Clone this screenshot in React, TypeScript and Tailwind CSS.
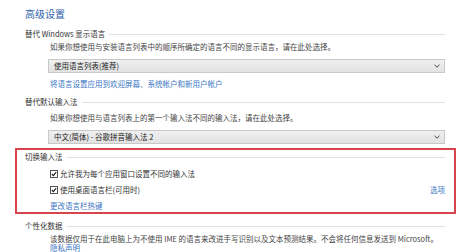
import React from "react";

const FONT = { fontFamily: '"Noto Sans CJK SC", "Noto Sans", sans-serif' };

function Header({ label }: { label: string }) {
  return (
    <div className="flex h-[12px] items-center">
      <span className="text-[7.5px] leading-none text-[#333]">{label}</span>
      <div className="ml-[4px] h-px flex-1 bg-[#e2e2e2]" />
    </div>
  );
}

function Dropdown({ value }: { value: string }) {
  return (
    <div className="ml-[23px] flex h-[14px] items-center justify-between border border-[#c8c8c8] bg-gradient-to-b from-[#f0f0f0] to-[#e2e2e2] pl-[5px] pr-[4px]">
      <span className="text-[7.5px] leading-none text-[#222]">{value}</span>
      <svg width="6" height="4" viewBox="0 0 6 4" className="text-[#444]">
        <path d="M0.5 0.8 L3 3.2 L5.5 0.8" fill="none" stroke="currentColor" strokeWidth="1" />
      </svg>
    </div>
  );
}

function Check({ label }: { label: string }) {
  return (
    <div className="flex items-center">
      <div className="flex h-[8px] w-[8px] items-center justify-center border border-[#555] bg-white">
        <svg width="6" height="6" viewBox="0 0 6 6">
          <path d="M0.8 3 L2.4 4.6 L5.2 1.2" fill="none" stroke="#222" strokeWidth="1.1" />
        </svg>
      </div>
      <span className="ml-[2px] text-[7.5px] leading-none text-[#333]">{label}</span>
    </div>
  );
}

export default function App() {
  return (
    <div className="h-[252px] w-[461px] overflow-hidden bg-white" style={FONT}>
      {/* title */}
      <div className="ml-[25px] mt-[6px] flex h-[16px] items-center">
        <span className="text-[10px] leading-none text-[#2f62aa]">高级设置</span>
      </div>

      {/* 显示语言 */}
      <div className="ml-[25px] mr-[16px] mt-[6px]">
        <Header label="替代 Windows 显示语言" />
        <div className="ml-[25px] mt-px flex h-[12px] items-center text-[7.5px] leading-none text-[#444]">
          如果你想使用与安装语言列表中的顺序所确定的语言不同的显示语言，请在此处选择。
        </div>
        <div className="mt-[6px]">
          <Dropdown value="使用语言列表(推荐)" />
        </div>
        <div className="ml-[25px] mt-[5px] flex h-[12px] items-center text-[7.5px] leading-none text-[#3a76c4]">
          将语言设置应用到欢迎屏幕、系统帐户和新用户帐户
        </div>
      </div>

      {/* 默认输入法 */}
      <div className="ml-[25px] mr-[16px] mt-[6px]">
        <Header label="替代默认输入法" />
        <div className="ml-[25px] mt-[4px] flex h-[12px] items-center text-[7.5px] leading-none text-[#444]">
          如果你想使用与语言列表上的第一个输入法不同的输入法，请在此处选择。
        </div>
        <div className="mt-[6px]">
          <Dropdown value="中文(简体) - 谷歌拼音输入法 2" />
        </div>
      </div>

      {/* 切换输入法 */}
      <div className="ml-[15px] mr-[5px] mt-[4px] border-2 border-[#d8444b] pl-[8px] pr-[9px] pt-[1px]">
        <Header label="切换输入法" />
        <div className="ml-[25px] mt-[5px] flex h-[12px] items-center">
          <Check label="允许我为每个应用窗口设置不同的输入法" />
        </div>
        <div className="ml-[25px] mt-[4px] flex h-[12px] items-center justify-between">
          <Check label="使用桌面语言栏(可用时)" />
          <span className="text-[7.5px] leading-none text-[#3a76c4]">选项</span>
        </div>
        <div className="ml-[25px] mt-[4px] flex h-[12px] items-center text-[7.5px] leading-none text-[#3a76c4]">
          更改语言栏热键
        </div>
      </div>

      {/* 个性化数据 */}
      <div className="ml-[25px] mr-[16px] mt-[6px]">
        <Header label="个性化数据" />
        <div className="ml-[25px] mt-[3px] flex h-[8px] items-center whitespace-nowrap text-[7.5px] leading-none text-[#444]">
          该数据仅用于在此电脑上为不使用 IME 的语言来改进手写识别以及文本预测结果。不会将任何信息发送到 Microsoft。
        </div>
        <div className="ml-[25px] mt-px flex h-[8px] items-center text-[7.5px] leading-none text-[#3a76c4]">
          隐私声明
        </div>
      </div>
    </div>
  );
}
